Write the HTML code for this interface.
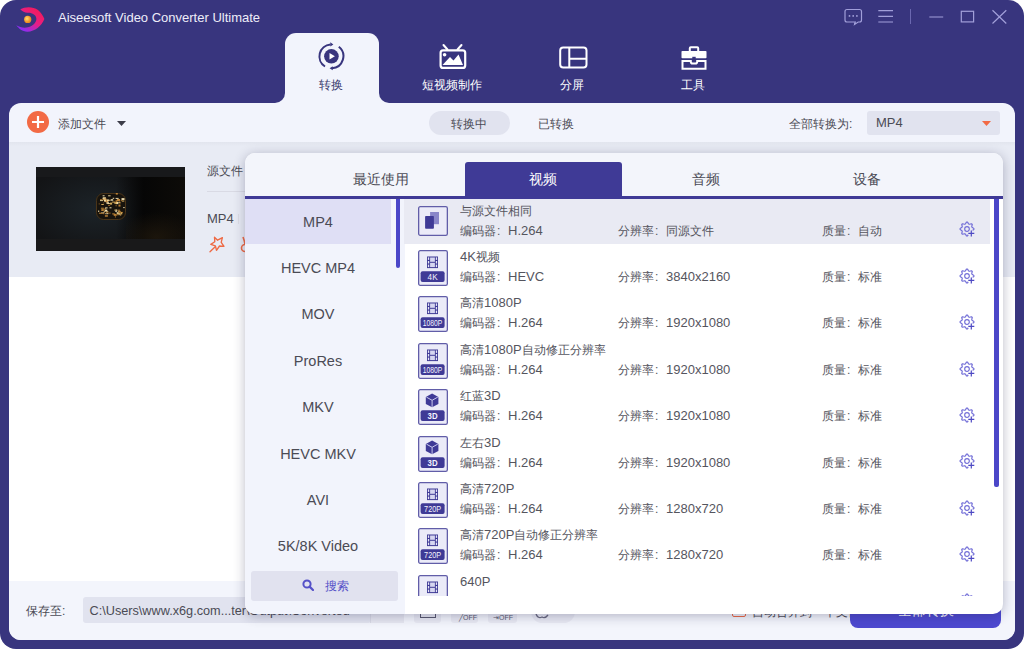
<!DOCTYPE html>
<html><head><meta charset="utf-8">
<style>
*{margin:0;padding:0;box-sizing:border-box}
html,body{width:1024px;height:649px;overflow:hidden;background:#fff;font-family:"Liberation Sans",sans-serif}
.a{position:absolute}
#win{position:absolute;left:0;top:0;width:1024px;height:649px;background:#38357e;border-radius:16px;overflow:hidden}
.title{left:58px;top:10px;color:#eeedf9;font-size:13px;white-space:nowrap;line-height:15px}
.nl{color:#fff;font-size:12px;text-align:center;width:100px;top:78px;white-space:nowrap;line-height:14px}
.t{color:#4b4b55;font-size:12px;white-space:nowrap;line-height:14px}
.T{color:#55555e;font-size:12px;white-space:nowrap;line-height:14px}
.L{font-size:13px}
.c{display:inline-block;width:12px;padding-left:1px}
</style></head><body>
<div id="win">
  <!-- logo -->
  <svg class="a" style="left:0;top:0" width="60" height="40" viewBox="0 0 60 40">
    <defs><linearGradient id="lg" x1="0.9" y1="0.1" x2="0.2" y2="0.9"><stop offset="0" stop-color="#f51a55"/><stop offset="0.5" stop-color="#e81e84"/><stop offset="1" stop-color="#8e2df2"/></linearGradient>
    <radialGradient id="og" cx="0.4" cy="0.4"><stop offset="0" stop-color="#ffe070"/><stop offset="1" stop-color="#f29020"/></radialGradient></defs>
    <path d="M20.3 9.2 C25 6.6 33 6.3 38 10 C41 12.5 43 15.5 44.4 19 C41.5 26 35 31.5 27.5 31.7 C22.5 31.8 18.8 28.5 16.3 25.3 C20 27.5 24 28.2 28 27.3 C33 26 36.4 22.5 36.4 19 C36.4 15 32 12.6 28 12.8 C25 13 22.5 11.5 20.3 9.2Z" fill="url(#lg)"/>
    <circle cx="27.7" cy="19.4" r="3.6" fill="url(#og)"/>
  </svg>
  <div class="a title">Aiseesoft Video Converter Ultimate</div>

  <!-- top right icons -->
  <svg class="a" style="left:840px;top:4px" width="175" height="24" viewBox="840 4 175 24" fill="none" stroke="#a19fd9" stroke-width="1.2">
    <path d="M847 9.5 H859.5 Q861.5 9.5 861.5 11.5 V20 Q861.5 22 859.5 22 H858.2 L854.6 24.4 L855.3 22 H847 Q845 22 845 20 V11.5 Q845 9.5 847 9.5Z"/>
    <circle cx="849.5" cy="15.9" r="0.9" fill="#a4a2dc" stroke="none"/>
    <circle cx="853.2" cy="15.9" r="0.9" fill="#a4a2dc" stroke="none"/>
    <circle cx="856.9" cy="15.9" r="0.9" fill="#a4a2dc" stroke="none"/>
    <path d="M878.3 10.6 H893 M878.3 16.3 H893 M878.3 22 H893"/>
    <path d="M910.5 9 V24" stroke-width="1" stroke="#6b68b0"/>
    <path d="M929.3 17 H943.2"/>
    <rect x="961.3" y="11.3" width="12.3" height="10.6"/>
    <path d="M992.5 10.3 L1006.3 23.5 M1006.3 10.3 L992.5 23.5"/>
  </svg>

  <!-- active tab -->
  <div class="a" style="left:285px;top:33px;width:94px;height:72px;background:#f2f4fc;border-radius:11px 11px 0 0"></div>
  <div class="a" style="left:273px;top:90px;width:12px;height:13px;background:#f2f4fc"></div>
  <div class="a" style="left:263px;top:80px;width:22px;height:23px;background:#38357e;border-radius:0 0 10px 0"></div>
  <div class="a" style="left:379px;top:90px;width:12px;height:13px;background:#f2f4fc"></div>
  <div class="a" style="left:379px;top:80px;width:22px;height:23px;background:#38357e;border-radius:0 0 0 10px"></div>

  <!-- nav icons -->
  <svg class="a" style="left:316px;top:41px" width="30" height="30" viewBox="316 41 30 30">
    <circle cx="331.4" cy="56.3" r="7.3" fill="#38357e"/>
    <path d="M329.5 53 L334.9 56.3 L329.5 59.6 Z" fill="#fff"/>
    <path d="M325 66.5 A12 12 0 0 1 330.5 44.4" fill="none" stroke="#38357e" stroke-width="2"/>
    <path d="M338.8 46.8 A12 12 0 0 1 332 68.2" fill="none" stroke="#38357e" stroke-width="2"/>
    <path d="M330.3 42.3 L333.4 44.4 L330.3 46.4Z" fill="#38357e"/>
    <path d="M332.7 66.2 L329.6 68.3 L332.7 70.3Z" fill="#38357e"/>
  </svg>
  <svg class="a" style="left:436px;top:42px" width="34" height="30" viewBox="436 42 34 30">
    <path d="M443.5 45 L447.5 49.5 M461.5 45 L457.5 49.5" stroke="#fff" stroke-width="2" stroke-linecap="round"/>
    <rect x="440.6" y="50.3" width="24.6" height="17.6" rx="2.5" fill="none" stroke="#fff" stroke-width="2.2"/>
    <circle cx="444.6" cy="54.7" r="1.8" fill="#fff"/>
    <path d="M442.5 65 L450 57 L453.5 60.5 L458.5 54.5 L463 65Z" fill="#fff"/>
  </svg>
  <svg class="a" style="left:556px;top:43px" width="34" height="30" viewBox="556 43 34 30" fill="none" stroke="#fff" stroke-width="2">
    <rect x="560.2" y="47.4" width="26.3" height="20.2" rx="3"/>
    <path d="M569.3 47.4 V67.6 M569.3 58.7 H586.5"/>
  </svg>
  <svg class="a" style="left:678px;top:44px" width="32" height="28" viewBox="678 44 32 28">
    <path d="M689.8 51 V48.3 Q689.8 47.3 690.8 47.3 H697.2 Q698.2 47.3 698.2 48.3 V51" fill="none" stroke="#fff" stroke-width="2"/>
    <rect x="681.5" y="51" width="25" height="7.3" rx="0.8" fill="#fff"/>
    <path d="M682.5 60.9 H690.8 V61.8 Q690.8 63.6 692.6 63.6 H695.4 Q697.2 63.6 697.2 61.8 V60.9 H705.5 V68.8 H682.5Z" fill="none" stroke="#fff" stroke-width="2"/>
    <rect x="692.3" y="56.8" width="3.4" height="4.2" fill="#38357e"/>
  </svg>

  <div class="a nl" style="left:281px;color:#3a3a6e">转换</div>
  <div class="a nl" style="left:402px">短视频制作</div>
  <div class="a nl" style="left:522px">分屏</div>
  <div class="a nl" style="left:643px">工具</div>

  <!-- content panel -->
  <div class="a" style="left:9px;top:102.6px;width:1006px;height:537px;background:#f2f4fc;border-radius:12px;overflow:hidden">
    <div class="a" style="left:0;top:39.5px;width:1006px;height:134.5px;background:#e8ebf4"></div>
    <div class="a" style="left:0;top:39.5px;width:1006px;height:4px;background:linear-gradient(#e2e5ee,#e8ebf4)"></div>
    <div class="a" style="left:0;top:174px;width:1006px;height:304.4px;background:#fff"></div>
    <div class="a" style="left:0;top:478.4px;width:1006px;height:60px;background:#f3f5fc"></div>
  </div>

  <!-- toolbar -->
  <svg class="a" style="left:27.1px;top:111.4px" width="22" height="22" viewBox="0 0 22 22"><circle cx="11" cy="11" r="11" fill="#f26a45"/><path d="M11 5 V17 M5 11 H17" stroke="#fff" stroke-width="2.2"/></svg>
  <div class="a t" style="left:58px;top:116.5px">添加文件</div>
  <svg class="a" style="left:117px;top:120.8px" width="9" height="5" viewBox="0 0 9 5"><path d="M0 0 H9 L4.5 5Z" fill="#3c3c48"/></svg>
  <div class="a" style="left:429px;top:111px;width:81px;height:24px;border-radius:12px;background:#e1e3ef"></div>
  <div class="a t" style="left:451px;top:117px">转换中</div>
  <div class="a t" style="left:538px;top:117px">已转换</div>
  <div class="a t" style="left:789px;top:117px">全部转换为:</div>
  <div class="a" style="left:867px;top:111px;width:133px;height:24px;border-radius:3px;background:#e1e3ef"></div>
  <div class="a t" style="left:876px;top:116px;font-size:13px">MP4</div>
  <svg class="a" style="left:981.5px;top:120.6px" width="9" height="5" viewBox="0 0 9 5"><path d="M0 0 H9 L4.5 5Z" fill="#f26a45"/></svg>

  <!-- file item -->
  <div class="a" style="left:36px;top:167px;width:149px;height:84px;background:#131416;overflow:hidden">
    <div class="a" style="left:0;top:0;width:149px;height:10px;background:#18191b"></div>
    <div class="a" style="left:0;top:10px;width:149px;height:62px;background:radial-gradient(ellipse 70px 45px at 60px 32px,#1c2328,rgba(20,22,25,0) 100%)"></div>
    <div class="a" style="left:80px;top:10px;width:69px;height:62px;background:linear-gradient(90deg,rgba(5,5,5,0),#060606 40%,#0d0b08)"></div>
    <div class="a" style="left:90px;top:40px;width:59px;height:32px;background:radial-gradient(ellipse 40px 25px at 30px 30px,rgba(40,30,15,.6),rgba(20,15,8,0))"></div>
    <div class="a" style="left:0;top:72px;width:149px;height:12px;background:#19191a"></div>
    <svg class="a" style="left:60px;top:26px" width="30" height="27" viewBox="0 0 30 27"><rect x="0.5" y="0.5" width="29" height="26" rx="7" fill="#17130d" stroke="#4a3418" stroke-width="1"/><rect x="7.2" y="9.4" width="1" height="1" fill="#9a6a2a" opacity="0.9"/><rect x="11.5" y="10.1" width="3" height="1" fill="#f5dfa0" opacity="0.9"/><rect x="10.9" y="9.5" width="1.5" height="1" fill="#9a6a2a" opacity="0.9"/><rect x="2.7" y="10.4" width="1" height="1" fill="#9a6a2a" opacity="0.9"/><rect x="12.0" y="6.8" width="2.5" height="1" fill="#e8b860" opacity="0.9"/><rect x="14.1" y="9.6" width="2" height="2" fill="#e8b860" opacity="0.9"/><rect x="4.0" y="7.1" width="3" height="1" fill="#f5dfa0" opacity="0.9"/><rect x="4.0" y="6.0" width="2" height="1" fill="#9a6a2a" opacity="0.9"/><rect x="7.0" y="4.5" width="3" height="1" fill="#fff0c0" opacity="0.9"/><rect x="6.6" y="5.3" width="2" height="2" fill="#9a6a2a" opacity="0.9"/><rect x="10.7" y="6.8" width="1.5" height="1" fill="#e8b860" opacity="0.9"/><rect x="10.4" y="9.2" width="2.5" height="1.5" fill="#fff0c0" opacity="0.9"/><rect x="5.9" y="15.6" width="1" height="2" fill="#e8b860" opacity="0.9"/><rect x="8.1" y="6.4" width="2.5" height="2" fill="#f5dfa0" opacity="0.9"/><rect x="9.2" y="7.7" width="3" height="1.5" fill="#c88a38" opacity="0.9"/><rect x="6.6" y="4.5" width="3" height="2" fill="#f5dfa0" opacity="0.9"/><rect x="12.1" y="2.3" width="2.5" height="1" fill="#f5dfa0" opacity="0.9"/><rect x="7.7" y="5.6" width="3" height="2" fill="#c88a38" opacity="0.9"/><rect x="6.6" y="2.3" width="2" height="1" fill="#fff0c0" opacity="0.9"/><rect x="5.3" y="11.0" width="2.5" height="1" fill="#e8b860" opacity="0.9"/><rect x="8.2" y="6.5" width="1.5" height="2" fill="#fff0c0" opacity="0.9"/><rect x="11.2" y="6.4" width="1.5" height="2" fill="#fff0c0" opacity="0.9"/><rect x="14.7" y="6.2" width="2.5" height="1.5" fill="#fff0c0" opacity="0.9"/><rect x="25.8" y="7.6" width="2.5" height="1" fill="#e8b860" opacity="0.9"/><rect x="22.6" y="8.8" width="1.5" height="1" fill="#fff0c0" opacity="0.9"/><rect x="22.0" y="6.4" width="2" height="1" fill="#e8b860" opacity="0.9"/><rect x="18.3" y="9.3" width="3" height="1.5" fill="#e8b860" opacity="0.9"/><rect x="19.6" y="4.9" width="3" height="1" fill="#fff0c0" opacity="0.9"/><rect x="25.5" y="5.1" width="3" height="2" fill="#fff0c0" opacity="0.9"/><rect x="19.8" y="8.8" width="2.5" height="1" fill="#e8b860" opacity="0.9"/><rect x="23.0" y="8.8" width="1.5" height="1" fill="#c88a38" opacity="0.9"/><rect x="19.8" y="7.2" width="3" height="1" fill="#9a6a2a" opacity="0.9"/><rect x="23.4" y="9.6" width="1" height="1" fill="#e8b860" opacity="0.9"/><rect x="19.6" y="7.0" width="2" height="1.5" fill="#9a6a2a" opacity="0.9"/><rect x="19.9" y="9.1" width="2.5" height="2" fill="#fff0c0" opacity="0.9"/><rect x="19.7" y="8.1" width="1" height="1.5" fill="#c88a38" opacity="0.9"/><rect x="16.1" y="8.6" width="3" height="1" fill="#e8b860" opacity="0.9"/><rect x="24.7" y="7.0" width="1.5" height="1" fill="#9a6a2a" opacity="0.9"/><rect x="19.6" y="11.8" width="1" height="1.5" fill="#9a6a2a" opacity="0.9"/><rect x="19.7" y="9.3" width="1.5" height="1.5" fill="#e8b860" opacity="0.9"/><rect x="16.7" y="4.8" width="1.5" height="1" fill="#fff0c0" opacity="0.9"/><rect x="20.9" y="6.0" width="3" height="2" fill="#c88a38" opacity="0.9"/><rect x="19.8" y="-0.4" width="2" height="2" fill="#c88a38" opacity="0.9"/><rect x="22.5" y="11.6" width="2" height="2" fill="#c88a38" opacity="0.9"/><rect x="10.9" y="18.3" width="1.5" height="1" fill="#e8b860" opacity="0.9"/><rect x="5.1" y="19.5" width="2.5" height="1" fill="#fff0c0" opacity="0.9"/><rect x="10.5" y="17.6" width="1" height="1" fill="#fff0c0" opacity="0.9"/><rect x="9.1" y="14.4" width="2.5" height="1" fill="#fff0c0" opacity="0.9"/><rect x="8.7" y="16.6" width="2.5" height="2" fill="#fff0c0" opacity="0.9"/><rect x="7.9" y="17.8" width="1.5" height="1" fill="#e8b860" opacity="0.9"/><rect x="12.2" y="19.6" width="2.5" height="1" fill="#9a6a2a" opacity="0.9"/><rect x="12.1" y="12.0" width="2" height="1" fill="#9a6a2a" opacity="0.9"/><rect x="7.4" y="18.8" width="1" height="1" fill="#fff0c0" opacity="0.9"/><rect x="10.1" y="18.8" width="1.5" height="1" fill="#c88a38" opacity="0.9"/><rect x="8.9" y="22.2" width="3" height="1.5" fill="#c88a38" opacity="0.9"/><rect x="2.2" y="17.5" width="1" height="1.5" fill="#fff0c0" opacity="0.9"/><rect x="4.9" y="14.6" width="3" height="2" fill="#9a6a2a" opacity="0.9"/><rect x="9.3" y="20.2" width="3" height="1" fill="#fff0c0" opacity="0.9"/><rect x="8.7" y="15.2" width="1.5" height="1" fill="#e8b860" opacity="0.9"/><rect x="2.9" y="19.7" width="3" height="1" fill="#c88a38" opacity="0.9"/><rect x="6.4" y="15.9" width="2.5" height="1" fill="#9a6a2a" opacity="0.9"/><rect x="10.0" y="19.6" width="1" height="1" fill="#9a6a2a" opacity="0.9"/><rect x="7.3" y="19.2" width="1" height="2" fill="#c88a38" opacity="0.9"/><rect x="5.1" y="16.8" width="3" height="1" fill="#c88a38" opacity="0.9"/><rect x="4.2" y="20.0" width="2.5" height="1" fill="#9a6a2a" opacity="0.9"/><rect x="13.5" y="14.3" width="2" height="1" fill="#fff0c0" opacity="0.9"/><rect x="22.1" y="20.1" width="2.5" height="1.5" fill="#f5dfa0" opacity="0.9"/><rect x="19.4" y="16.4" width="1.5" height="1.5" fill="#f5dfa0" opacity="0.9"/><rect x="22.5" y="18.0" width="2" height="1" fill="#c88a38" opacity="0.9"/><rect x="27.2" y="14.1" width="1.5" height="1" fill="#fff0c0" opacity="0.9"/><rect x="22.4" y="17.9" width="1.5" height="1" fill="#fff0c0" opacity="0.9"/><rect x="24.3" y="18.9" width="2.5" height="1" fill="#c88a38" opacity="0.9"/><rect x="18.9" y="23.1" width="1" height="1.5" fill="#9a6a2a" opacity="0.9"/><rect x="16.2" y="20.1" width="2.5" height="1.5" fill="#9a6a2a" opacity="0.9"/><rect x="18.3" y="16.6" width="1" height="1" fill="#e8b860" opacity="0.9"/><rect x="22.5" y="18.8" width="2" height="1.5" fill="#f5dfa0" opacity="0.9"/><rect x="22.7" y="18.0" width="1.5" height="2" fill="#c88a38" opacity="0.9"/><rect x="17.7" y="20.9" width="3" height="2" fill="#c88a38" opacity="0.9"/><rect x="21.9" y="19.5" width="1.5" height="2" fill="#f5dfa0" opacity="0.9"/><rect x="20.9" y="19.5" width="1" height="1.5" fill="#f5dfa0" opacity="0.9"/><rect x="19.2" y="17.8" width="2" height="1" fill="#fff0c0" opacity="0.9"/><rect x="31.3" y="19.7" width="2.5" height="1.5" fill="#9a6a2a" opacity="0.9"/><rect x="23.7" y="21.5" width="1.5" height="1" fill="#e8b860" opacity="0.9"/><rect x="20.8" y="20.8" width="2" height="1.5" fill="#9a6a2a" opacity="0.9"/><rect x="21.2" y="16.7" width="3" height="1" fill="#c88a38" opacity="0.9"/><rect x="20.6" y="19.4" width="2" height="1" fill="#f5dfa0" opacity="0.9"/><rect x="24.8" y="19.4" width="1.5" height="2" fill="#e8b860" opacity="0.9"/><rect x="22.4" y="18.5" width="2.5" height="2" fill="#9a6a2a" opacity="0.9"/></svg>
  </div>
  <div class="a t" style="left:207px;top:164px">源文件</div>
  <div class="a" style="left:207px;top:191px;width:40px;height:1px;background:#d9dae4"></div>
  <div class="a t" style="left:207px;top:212px;font-size:13px">MP4</div>
  <div class="a" style="left:238px;top:214px;width:1px;height:10px;background:#dcdde6"></div>
  <svg class="a" style="left:205px;top:232px" width="24" height="24" viewBox="205 232 24 24" fill="none" stroke="#ee6a45" stroke-width="1.35" stroke-linejoin="round" stroke-linecap="round">
    <path d="M214.5 237.2 L217.6 240.2 L222.4 237.6 L221.2 242.3 L224 246.3 L219.5 246 L216.5 250.3 L215.4 245.8 L210.8 244.4 L214.8 241.8Z"/>
    <path d="M215.2 246.8 L210 251.8"/>
  </svg>
  <svg class="a" style="left:236px;top:232px" width="12" height="24" viewBox="236 232 12 24" fill="none" stroke="#ee6a45" stroke-width="1.6">
    <path d="M243 237 Q244.5 241 245 244"/><circle cx="245" cy="248" r="3.5"/>
  </svg>

  <!-- bottom bar -->
  <div class="a t" style="left:26px;top:604px">保存至:</div>
  <div class="a" style="left:82.7px;top:597px;width:288px;height:26px;border-radius:3px;background:#e1e3ef"></div>
  <div class="a t" style="left:89.5px;top:604px;font-size:12.7px;line-height:15px">C:\Users\www.x6g.com...ter\Output\Converted</div>
  <div class="a" style="left:370px;top:597px;width:34px;height:26px;background:#e6e7f1;border-left:1px solid #d8d9e5"></div>
  <div class="a" style="left:413.7px;top:600px;width:27.3px;height:23px;border-radius:3px;background:#e8e9f3"></div>
  <div class="a" style="left:420px;top:612px;width:16px;height:6px;border:1.5px solid #5a5a70;border-top:none"></div>
  <div class="a" style="left:450.8px;top:600px;width:27.3px;height:23px;border-radius:3px;background:#e8e9f3"></div>
  <div class="a" style="left:488px;top:600px;width:29px;height:23px;border-radius:3px;background:#e8e9f3"></div>
  <div class="a" style="left:459px;top:614px;font-size:7px;line-height:8px;color:#5a5a70">╱OFF</div>
  <div class="a" style="left:493px;top:614px;font-size:7px;line-height:8px;color:#5a5a70">⇥OFF</div>
  <div class="a" style="left:531px;top:600px;width:44px;height:23px;border-radius:12px;background:#e8e9f3"></div>
  <svg class="a" style="left:532px;top:610px" width="22" height="10" viewBox="0 0 22 10"><path d="M4 4 Q6 9 10 7 Q13 9 16 5" fill="none" stroke="#6a6a80" stroke-width="1.3"/></svg>
  <div class="a" style="left:732px;top:603px;width:14px;height:14px;border:1.5px solid #ee6a45;border-radius:2px"></div>
  <div class="a t" style="left:752px;top:605px">自动合并到一个文件</div>
  <div class="a" style="left:850px;top:590px;width:151px;height:38px;border-radius:8px;background:#4d49d0"></div>
  <div class="a" style="left:850px;top:602px;width:151px;text-align:center;font-size:14px;line-height:16px;color:#fff">全部转换</div>
<div class="a" style="left:245px;top:153px;width:758px;height:461.3px;border-radius:10px;background:#fff;box-shadow:0 2px 12px rgba(30,30,70,.3);overflow:hidden">
<div class="a" style="left:0;top:0;width:758px;height:44px;background:#f3f5fb"></div>
<div class="a" style="left:220px;top:9px;width:157px;height:35px;background:#3f3a96;border-radius:3px 3px 0 0"></div>
<div class="a" style="left:0;top:43px;width:758px;height:3px;background:#3f3a96"></div>
<div class="a" style="left:0;top:46px;width:159.7px;height:416px;background:#f2f4fc"></div>
<div class="a" style="left:0;top:46px;width:145.5px;height:44.5px;background:#dfdff5"></div>
<div class="a" style="left:150.5px;top:46px;width:4.5px;height:69px;border-radius:0 0 2px 2px;background:#4b47c8"></div>
<div class="a" style="left:159px;top:46px;width:586px;height:44.5px;background:#e9eaf3"></div>
<div class="a" style="left:749px;top:46px;width:4.6px;height:288px;border-radius:0 0 2px 2px;background:#4b47c8"></div>
<div class="a" style="left:6px;top:418px;width:147px;height:30px;border-radius:3px;background:#e1e2ef"></div>
</div>
<div class="a" style="left:321px;top:171px;width:120px;text-align:center;font-size:14px;line-height:16px;color:#4b4b55;white-space:nowrap">最近使用</div>
<div class="a" style="left:483px;top:171px;width:120px;text-align:center;font-size:14px;line-height:16px;color:#ffffff;white-space:nowrap">视频</div>
<div class="a" style="left:646px;top:171px;width:120px;text-align:center;font-size:14px;line-height:16px;color:#4b4b55;white-space:nowrap">音频</div>
<div class="a" style="left:807px;top:171px;width:120px;text-align:center;font-size:14px;line-height:16px;color:#4b4b55;white-space:nowrap">设备</div>
<div class="a" style="left:258px;top:212.5px;width:120px;text-align:center;font-size:14.5px;line-height:18px;color:#4b4b55;white-space:nowrap">MP4</div>
<div class="a" style="left:258px;top:258.9px;width:120px;text-align:center;font-size:14.5px;line-height:18px;color:#4b4b55;white-space:nowrap">HEVC MP4</div>
<div class="a" style="left:258px;top:305.3px;width:120px;text-align:center;font-size:14.5px;line-height:18px;color:#4b4b55;white-space:nowrap">MOV</div>
<div class="a" style="left:258px;top:351.7px;width:120px;text-align:center;font-size:14.5px;line-height:18px;color:#4b4b55;white-space:nowrap">ProRes</div>
<div class="a" style="left:258px;top:398.1px;width:120px;text-align:center;font-size:14.5px;line-height:18px;color:#4b4b55;white-space:nowrap">MKV</div>
<div class="a" style="left:258px;top:444.5px;width:120px;text-align:center;font-size:14.5px;line-height:18px;color:#4b4b55;white-space:nowrap">HEVC MKV</div>
<div class="a" style="left:258px;top:490.9px;width:120px;text-align:center;font-size:14.5px;line-height:18px;color:#4b4b55;white-space:nowrap">AVI</div>
<div class="a" style="left:258px;top:537.3px;width:120px;text-align:center;font-size:14.5px;line-height:18px;color:#4b4b55;white-space:nowrap">5K/8K Video</div>
<svg class="a" style="left:302px;top:579px" width="12" height="12" viewBox="0 0 12 12"><circle cx="5" cy="5" r="3.6" fill="none" stroke="#5551c8" stroke-width="2"/><path d="M7.6 7.6 L11 11" stroke="#5551c8" stroke-width="2.2" stroke-linecap="round"/></svg>
<div class="a" style="left:325px;top:579px;font-size:12px;line-height:14px;color:#5551c8;white-space:nowrap">搜索</div>
<div class="a" style="left:405px;top:199px;width:589px;height:396.6px;overflow:hidden">
<div class="a T" style="left:55px;top:4.5px">与源文件相同</div>
<div class="a T" style="left:55px;top:24.5px">编码器<span class="c">:</span><span class="L">H.264</span></div>
<div class="a T" style="left:213px;top:24.5px">分辨率<span class="c">:</span>同源文件</div>
<div class="a T" style="left:417px;top:24.5px">质量<span class="c">:</span>自动</div>
<svg class="a" style="left:553px;top:21.3px" width="20" height="20" viewBox="-9 -9 20 20"><path d="M-0.54 -6.88 L0.54 -6.88 L1.64 -5.04 L2.41 -4.72 L4.48 -5.25 L5.25 -4.48 L4.72 -2.41 L5.04 -1.64 L6.88 -0.54 L6.88 0.54 L5.04 1.64 L4.72 2.41 L5.25 4.48 L4.48 5.25 L2.41 4.72 L1.64 5.04 L0.54 6.88 L-0.54 6.88 L-1.64 5.04 L-2.41 4.72 L-4.48 5.25 L-5.25 4.48 L-4.72 2.41 L-5.04 1.64 L-6.88 0.54 L-6.88 -0.54 L-5.04 -1.64 L-4.72 -2.41 L-5.25 -4.48 L-4.48 -5.25 L-2.41 -4.72 L-1.64 -5.04Z" fill="none" stroke="#7470d8" stroke-width="1.2" stroke-linejoin="round"/><circle cx="0" cy="0" r="2.3" fill="none" stroke="#7470d8" stroke-width="1.2"/><path d="M4.3 1.2 V7.6 M1.1 4.4 H7.5" stroke="#e9eaf3" stroke-width="3.2"/><path d="M4.3 1.4 V7.4 M1.3 4.4 H7.3" stroke="#4e4ac4" stroke-width="1.2"/></svg>
<svg class="a" style="left:13px;top:7.0px" width="30" height="30" viewBox="0 0 30 30"><rect x="0.65" y="0.65" width="28.7" height="28.7" rx="1.6" fill="#ebebf8" stroke="#615da8" stroke-width="1.3"/><rect x="12.1" y="6" width="8.9" height="12.2" fill="#8986c9"/><rect x="7.1" y="10" width="8.8" height="12.7" rx="0.8" fill="#3f3a96"/></svg>
<div class="a T" style="left:55px;top:50.9px"><span class="L">4K</span>视频</div>
<div class="a T" style="left:55px;top:70.9px">编码器<span class="c">:</span><span class="L">HEVC</span></div>
<div class="a T" style="left:213px;top:70.9px">分辨率<span class="c">:</span><span class="L">3840x2160</span></div>
<div class="a T" style="left:417px;top:70.9px">质量<span class="c">:</span>标准</div>
<svg class="a" style="left:553px;top:67.7px" width="20" height="20" viewBox="-9 -9 20 20"><path d="M-0.54 -6.88 L0.54 -6.88 L1.64 -5.04 L2.41 -4.72 L4.48 -5.25 L5.25 -4.48 L4.72 -2.41 L5.04 -1.64 L6.88 -0.54 L6.88 0.54 L5.04 1.64 L4.72 2.41 L5.25 4.48 L4.48 5.25 L2.41 4.72 L1.64 5.04 L0.54 6.88 L-0.54 6.88 L-1.64 5.04 L-2.41 4.72 L-4.48 5.25 L-5.25 4.48 L-4.72 2.41 L-5.04 1.64 L-6.88 0.54 L-6.88 -0.54 L-5.04 -1.64 L-4.72 -2.41 L-5.25 -4.48 L-4.48 -5.25 L-2.41 -4.72 L-1.64 -5.04Z" fill="none" stroke="#7470d8" stroke-width="1.2" stroke-linejoin="round"/><circle cx="0" cy="0" r="2.3" fill="none" stroke="#7470d8" stroke-width="1.2"/><path d="M4.3 1.2 V7.6 M1.1 4.4 H7.5" stroke="#ffffff" stroke-width="3.2"/><path d="M4.3 1.4 V7.4 M1.3 4.4 H7.3" stroke="#4e4ac4" stroke-width="1.2"/></svg>
<svg class="a" style="left:13px;top:51.0px" width="30" height="36" viewBox="0 0 30 36"><rect x="0.65" y="0.65" width="28.7" height="34.7" rx="1.6" fill="#ebebf8" stroke="#615da8" stroke-width="1.3"/><rect x="9" y="6.5" width="11" height="11.6" fill="#3f3a96"/><rect x="9.9" y="7.4" width="1.3" height="2.5" fill="#e6e6f6"/><rect x="17.8" y="7.4" width="1.3" height="2.5" fill="#e6e6f6"/><rect x="9.9" y="11.0" width="1.3" height="2.5" fill="#e6e6f6"/><rect x="17.8" y="11.0" width="1.3" height="2.5" fill="#e6e6f6"/><rect x="9.9" y="14.6" width="1.3" height="2.5" fill="#e6e6f6"/><rect x="17.8" y="14.6" width="1.3" height="2.5" fill="#e6e6f6"/><rect x="12.1" y="7.5" width="4.8" height="4.3" fill="#d6d6f0"/><rect x="12.1" y="12.8" width="4.8" height="4.3" fill="#d6d6f0"/><rect x="2.6" y="21.3" width="24" height="10.7" rx="2" fill="#3f3a96"/><text x="14.6" y="30.0" font-family="Liberation Sans" font-size="9.3" font-weight="normal" fill="#f4f4ff" text-anchor="middle" textLength="10" lengthAdjust="spacingAndGlyphs">4K</text></svg>
<div class="a T" style="left:55px;top:97.3px">高清<span class="L">1080P</span></div>
<div class="a T" style="left:55px;top:117.3px">编码器<span class="c">:</span><span class="L">H.264</span></div>
<div class="a T" style="left:213px;top:117.3px">分辨率<span class="c">:</span><span class="L">1920x1080</span></div>
<div class="a T" style="left:417px;top:117.3px">质量<span class="c">:</span>标准</div>
<svg class="a" style="left:553px;top:114.1px" width="20" height="20" viewBox="-9 -9 20 20"><path d="M-0.54 -6.88 L0.54 -6.88 L1.64 -5.04 L2.41 -4.72 L4.48 -5.25 L5.25 -4.48 L4.72 -2.41 L5.04 -1.64 L6.88 -0.54 L6.88 0.54 L5.04 1.64 L4.72 2.41 L5.25 4.48 L4.48 5.25 L2.41 4.72 L1.64 5.04 L0.54 6.88 L-0.54 6.88 L-1.64 5.04 L-2.41 4.72 L-4.48 5.25 L-5.25 4.48 L-4.72 2.41 L-5.04 1.64 L-6.88 0.54 L-6.88 -0.54 L-5.04 -1.64 L-4.72 -2.41 L-5.25 -4.48 L-4.48 -5.25 L-2.41 -4.72 L-1.64 -5.04Z" fill="none" stroke="#7470d8" stroke-width="1.2" stroke-linejoin="round"/><circle cx="0" cy="0" r="2.3" fill="none" stroke="#7470d8" stroke-width="1.2"/><path d="M4.3 1.2 V7.6 M1.1 4.4 H7.5" stroke="#ffffff" stroke-width="3.2"/><path d="M4.3 1.4 V7.4 M1.3 4.4 H7.3" stroke="#4e4ac4" stroke-width="1.2"/></svg>
<svg class="a" style="left:13px;top:97.4px" width="30" height="36" viewBox="0 0 30 36"><rect x="0.65" y="0.65" width="28.7" height="34.7" rx="1.6" fill="#ebebf8" stroke="#615da8" stroke-width="1.3"/><rect x="9" y="6.5" width="11" height="11.6" fill="#3f3a96"/><rect x="9.9" y="7.4" width="1.3" height="2.5" fill="#e6e6f6"/><rect x="17.8" y="7.4" width="1.3" height="2.5" fill="#e6e6f6"/><rect x="9.9" y="11.0" width="1.3" height="2.5" fill="#e6e6f6"/><rect x="17.8" y="11.0" width="1.3" height="2.5" fill="#e6e6f6"/><rect x="9.9" y="14.6" width="1.3" height="2.5" fill="#e6e6f6"/><rect x="17.8" y="14.6" width="1.3" height="2.5" fill="#e6e6f6"/><rect x="12.1" y="7.5" width="4.8" height="4.3" fill="#d6d6f0"/><rect x="12.1" y="12.8" width="4.8" height="4.3" fill="#d6d6f0"/><rect x="2.6" y="21.3" width="24" height="10.7" rx="2" fill="#3f3a96"/><text x="14.6" y="30.0" font-family="Liberation Sans" font-size="9.3" font-weight="normal" fill="#f4f4ff" text-anchor="middle" textLength="19.5" lengthAdjust="spacingAndGlyphs">1080P</text></svg>
<div class="a T" style="left:55px;top:143.7px">高清<span class="L">1080P</span>自动修正分辨率</div>
<div class="a T" style="left:55px;top:163.7px">编码器<span class="c">:</span><span class="L">H.264</span></div>
<div class="a T" style="left:213px;top:163.7px">分辨率<span class="c">:</span><span class="L">1920x1080</span></div>
<div class="a T" style="left:417px;top:163.7px">质量<span class="c">:</span>标准</div>
<svg class="a" style="left:553px;top:160.5px" width="20" height="20" viewBox="-9 -9 20 20"><path d="M-0.54 -6.88 L0.54 -6.88 L1.64 -5.04 L2.41 -4.72 L4.48 -5.25 L5.25 -4.48 L4.72 -2.41 L5.04 -1.64 L6.88 -0.54 L6.88 0.54 L5.04 1.64 L4.72 2.41 L5.25 4.48 L4.48 5.25 L2.41 4.72 L1.64 5.04 L0.54 6.88 L-0.54 6.88 L-1.64 5.04 L-2.41 4.72 L-4.48 5.25 L-5.25 4.48 L-4.72 2.41 L-5.04 1.64 L-6.88 0.54 L-6.88 -0.54 L-5.04 -1.64 L-4.72 -2.41 L-5.25 -4.48 L-4.48 -5.25 L-2.41 -4.72 L-1.64 -5.04Z" fill="none" stroke="#7470d8" stroke-width="1.2" stroke-linejoin="round"/><circle cx="0" cy="0" r="2.3" fill="none" stroke="#7470d8" stroke-width="1.2"/><path d="M4.3 1.2 V7.6 M1.1 4.4 H7.5" stroke="#ffffff" stroke-width="3.2"/><path d="M4.3 1.4 V7.4 M1.3 4.4 H7.3" stroke="#4e4ac4" stroke-width="1.2"/></svg>
<svg class="a" style="left:13px;top:143.8px" width="30" height="36" viewBox="0 0 30 36"><rect x="0.65" y="0.65" width="28.7" height="34.7" rx="1.6" fill="#ebebf8" stroke="#615da8" stroke-width="1.3"/><rect x="9" y="6.5" width="11" height="11.6" fill="#3f3a96"/><rect x="9.9" y="7.4" width="1.3" height="2.5" fill="#e6e6f6"/><rect x="17.8" y="7.4" width="1.3" height="2.5" fill="#e6e6f6"/><rect x="9.9" y="11.0" width="1.3" height="2.5" fill="#e6e6f6"/><rect x="17.8" y="11.0" width="1.3" height="2.5" fill="#e6e6f6"/><rect x="9.9" y="14.6" width="1.3" height="2.5" fill="#e6e6f6"/><rect x="17.8" y="14.6" width="1.3" height="2.5" fill="#e6e6f6"/><rect x="12.1" y="7.5" width="4.8" height="4.3" fill="#d6d6f0"/><rect x="12.1" y="12.8" width="4.8" height="4.3" fill="#d6d6f0"/><rect x="2.6" y="21.3" width="24" height="10.7" rx="2" fill="#3f3a96"/><text x="14.6" y="30.0" font-family="Liberation Sans" font-size="9.3" font-weight="normal" fill="#f4f4ff" text-anchor="middle" textLength="19.5" lengthAdjust="spacingAndGlyphs">1080P</text></svg>
<div class="a T" style="left:55px;top:190.1px">红蓝<span class="L">3D</span></div>
<div class="a T" style="left:55px;top:210.1px">编码器<span class="c">:</span><span class="L">H.264</span></div>
<div class="a T" style="left:213px;top:210.1px">分辨率<span class="c">:</span><span class="L">1920x1080</span></div>
<div class="a T" style="left:417px;top:210.1px">质量<span class="c">:</span>标准</div>
<svg class="a" style="left:553px;top:206.9px" width="20" height="20" viewBox="-9 -9 20 20"><path d="M-0.54 -6.88 L0.54 -6.88 L1.64 -5.04 L2.41 -4.72 L4.48 -5.25 L5.25 -4.48 L4.72 -2.41 L5.04 -1.64 L6.88 -0.54 L6.88 0.54 L5.04 1.64 L4.72 2.41 L5.25 4.48 L4.48 5.25 L2.41 4.72 L1.64 5.04 L0.54 6.88 L-0.54 6.88 L-1.64 5.04 L-2.41 4.72 L-4.48 5.25 L-5.25 4.48 L-4.72 2.41 L-5.04 1.64 L-6.88 0.54 L-6.88 -0.54 L-5.04 -1.64 L-4.72 -2.41 L-5.25 -4.48 L-4.48 -5.25 L-2.41 -4.72 L-1.64 -5.04Z" fill="none" stroke="#7470d8" stroke-width="1.2" stroke-linejoin="round"/><circle cx="0" cy="0" r="2.3" fill="none" stroke="#7470d8" stroke-width="1.2"/><path d="M4.3 1.2 V7.6 M1.1 4.4 H7.5" stroke="#ffffff" stroke-width="3.2"/><path d="M4.3 1.4 V7.4 M1.3 4.4 H7.3" stroke="#4e4ac4" stroke-width="1.2"/></svg>
<svg class="a" style="left:13px;top:190.2px" width="30" height="36" viewBox="0 0 30 36"><rect x="0.65" y="0.65" width="28.7" height="34.7" rx="1.6" fill="#ebebf8" stroke="#615da8" stroke-width="1.3"/><path d="M14.1 4.5 L20.4 7.9 L20.4 14.9 L14.1 18.3 L7.8 14.9 L7.8 7.9Z" fill="#3f3a96"/><path d="M8.4 8.1 L14.1 11.3 L19.8 8.1 M14.1 11.3 V18.0" stroke="#c9c8ee" stroke-width="1" fill="none"/><rect x="2.6" y="21.3" width="24" height="10.7" rx="2" fill="#3f3a96"/><text x="14.6" y="30.0" font-family="Liberation Sans" font-size="9.3" font-weight="bold" fill="#f4f4ff" text-anchor="middle" textLength="10" lengthAdjust="spacingAndGlyphs">3D</text></svg>
<div class="a T" style="left:55px;top:236.5px">左右<span class="L">3D</span></div>
<div class="a T" style="left:55px;top:256.5px">编码器<span class="c">:</span><span class="L">H.264</span></div>
<div class="a T" style="left:213px;top:256.5px">分辨率<span class="c">:</span><span class="L">1920x1080</span></div>
<div class="a T" style="left:417px;top:256.5px">质量<span class="c">:</span>标准</div>
<svg class="a" style="left:553px;top:253.3px" width="20" height="20" viewBox="-9 -9 20 20"><path d="M-0.54 -6.88 L0.54 -6.88 L1.64 -5.04 L2.41 -4.72 L4.48 -5.25 L5.25 -4.48 L4.72 -2.41 L5.04 -1.64 L6.88 -0.54 L6.88 0.54 L5.04 1.64 L4.72 2.41 L5.25 4.48 L4.48 5.25 L2.41 4.72 L1.64 5.04 L0.54 6.88 L-0.54 6.88 L-1.64 5.04 L-2.41 4.72 L-4.48 5.25 L-5.25 4.48 L-4.72 2.41 L-5.04 1.64 L-6.88 0.54 L-6.88 -0.54 L-5.04 -1.64 L-4.72 -2.41 L-5.25 -4.48 L-4.48 -5.25 L-2.41 -4.72 L-1.64 -5.04Z" fill="none" stroke="#7470d8" stroke-width="1.2" stroke-linejoin="round"/><circle cx="0" cy="0" r="2.3" fill="none" stroke="#7470d8" stroke-width="1.2"/><path d="M4.3 1.2 V7.6 M1.1 4.4 H7.5" stroke="#ffffff" stroke-width="3.2"/><path d="M4.3 1.4 V7.4 M1.3 4.4 H7.3" stroke="#4e4ac4" stroke-width="1.2"/></svg>
<svg class="a" style="left:13px;top:236.6px" width="30" height="36" viewBox="0 0 30 36"><rect x="0.65" y="0.65" width="28.7" height="34.7" rx="1.6" fill="#ebebf8" stroke="#615da8" stroke-width="1.3"/><path d="M14.1 4.5 L20.4 7.9 L20.4 14.9 L14.1 18.3 L7.8 14.9 L7.8 7.9Z" fill="#3f3a96"/><path d="M8.4 8.1 L14.1 11.3 L19.8 8.1 M14.1 11.3 V18.0" stroke="#c9c8ee" stroke-width="1" fill="none"/><rect x="2.6" y="21.3" width="24" height="10.7" rx="2" fill="#3f3a96"/><text x="14.6" y="30.0" font-family="Liberation Sans" font-size="9.3" font-weight="bold" fill="#f4f4ff" text-anchor="middle" textLength="10" lengthAdjust="spacingAndGlyphs">3D</text></svg>
<div class="a T" style="left:55px;top:282.9px">高清<span class="L">720P</span></div>
<div class="a T" style="left:55px;top:302.9px">编码器<span class="c">:</span><span class="L">H.264</span></div>
<div class="a T" style="left:213px;top:302.9px">分辨率<span class="c">:</span><span class="L">1280x720</span></div>
<div class="a T" style="left:417px;top:302.9px">质量<span class="c">:</span>标准</div>
<svg class="a" style="left:553px;top:299.7px" width="20" height="20" viewBox="-9 -9 20 20"><path d="M-0.54 -6.88 L0.54 -6.88 L1.64 -5.04 L2.41 -4.72 L4.48 -5.25 L5.25 -4.48 L4.72 -2.41 L5.04 -1.64 L6.88 -0.54 L6.88 0.54 L5.04 1.64 L4.72 2.41 L5.25 4.48 L4.48 5.25 L2.41 4.72 L1.64 5.04 L0.54 6.88 L-0.54 6.88 L-1.64 5.04 L-2.41 4.72 L-4.48 5.25 L-5.25 4.48 L-4.72 2.41 L-5.04 1.64 L-6.88 0.54 L-6.88 -0.54 L-5.04 -1.64 L-4.72 -2.41 L-5.25 -4.48 L-4.48 -5.25 L-2.41 -4.72 L-1.64 -5.04Z" fill="none" stroke="#7470d8" stroke-width="1.2" stroke-linejoin="round"/><circle cx="0" cy="0" r="2.3" fill="none" stroke="#7470d8" stroke-width="1.2"/><path d="M4.3 1.2 V7.6 M1.1 4.4 H7.5" stroke="#ffffff" stroke-width="3.2"/><path d="M4.3 1.4 V7.4 M1.3 4.4 H7.3" stroke="#4e4ac4" stroke-width="1.2"/></svg>
<svg class="a" style="left:13px;top:283.0px" width="30" height="36" viewBox="0 0 30 36"><rect x="0.65" y="0.65" width="28.7" height="34.7" rx="1.6" fill="#ebebf8" stroke="#615da8" stroke-width="1.3"/><rect x="9" y="6.5" width="11" height="11.6" fill="#3f3a96"/><rect x="9.9" y="7.4" width="1.3" height="2.5" fill="#e6e6f6"/><rect x="17.8" y="7.4" width="1.3" height="2.5" fill="#e6e6f6"/><rect x="9.9" y="11.0" width="1.3" height="2.5" fill="#e6e6f6"/><rect x="17.8" y="11.0" width="1.3" height="2.5" fill="#e6e6f6"/><rect x="9.9" y="14.6" width="1.3" height="2.5" fill="#e6e6f6"/><rect x="17.8" y="14.6" width="1.3" height="2.5" fill="#e6e6f6"/><rect x="12.1" y="7.5" width="4.8" height="4.3" fill="#d6d6f0"/><rect x="12.1" y="12.8" width="4.8" height="4.3" fill="#d6d6f0"/><rect x="2.6" y="21.3" width="24" height="10.7" rx="2" fill="#3f3a96"/><text x="14.6" y="30.0" font-family="Liberation Sans" font-size="9.3" font-weight="normal" fill="#f4f4ff" text-anchor="middle" textLength="17" lengthAdjust="spacingAndGlyphs">720P</text></svg>
<div class="a T" style="left:55px;top:329.3px">高清<span class="L">720P</span>自动修正分辨率</div>
<div class="a T" style="left:55px;top:349.3px">编码器<span class="c">:</span><span class="L">H.264</span></div>
<div class="a T" style="left:213px;top:349.3px">分辨率<span class="c">:</span><span class="L">1280x720</span></div>
<div class="a T" style="left:417px;top:349.3px">质量<span class="c">:</span>标准</div>
<svg class="a" style="left:553px;top:346.1px" width="20" height="20" viewBox="-9 -9 20 20"><path d="M-0.54 -6.88 L0.54 -6.88 L1.64 -5.04 L2.41 -4.72 L4.48 -5.25 L5.25 -4.48 L4.72 -2.41 L5.04 -1.64 L6.88 -0.54 L6.88 0.54 L5.04 1.64 L4.72 2.41 L5.25 4.48 L4.48 5.25 L2.41 4.72 L1.64 5.04 L0.54 6.88 L-0.54 6.88 L-1.64 5.04 L-2.41 4.72 L-4.48 5.25 L-5.25 4.48 L-4.72 2.41 L-5.04 1.64 L-6.88 0.54 L-6.88 -0.54 L-5.04 -1.64 L-4.72 -2.41 L-5.25 -4.48 L-4.48 -5.25 L-2.41 -4.72 L-1.64 -5.04Z" fill="none" stroke="#7470d8" stroke-width="1.2" stroke-linejoin="round"/><circle cx="0" cy="0" r="2.3" fill="none" stroke="#7470d8" stroke-width="1.2"/><path d="M4.3 1.2 V7.6 M1.1 4.4 H7.5" stroke="#ffffff" stroke-width="3.2"/><path d="M4.3 1.4 V7.4 M1.3 4.4 H7.3" stroke="#4e4ac4" stroke-width="1.2"/></svg>
<svg class="a" style="left:13px;top:329.4px" width="30" height="36" viewBox="0 0 30 36"><rect x="0.65" y="0.65" width="28.7" height="34.7" rx="1.6" fill="#ebebf8" stroke="#615da8" stroke-width="1.3"/><rect x="9" y="6.5" width="11" height="11.6" fill="#3f3a96"/><rect x="9.9" y="7.4" width="1.3" height="2.5" fill="#e6e6f6"/><rect x="17.8" y="7.4" width="1.3" height="2.5" fill="#e6e6f6"/><rect x="9.9" y="11.0" width="1.3" height="2.5" fill="#e6e6f6"/><rect x="17.8" y="11.0" width="1.3" height="2.5" fill="#e6e6f6"/><rect x="9.9" y="14.6" width="1.3" height="2.5" fill="#e6e6f6"/><rect x="17.8" y="14.6" width="1.3" height="2.5" fill="#e6e6f6"/><rect x="12.1" y="7.5" width="4.8" height="4.3" fill="#d6d6f0"/><rect x="12.1" y="12.8" width="4.8" height="4.3" fill="#d6d6f0"/><rect x="2.6" y="21.3" width="24" height="10.7" rx="2" fill="#3f3a96"/><text x="14.6" y="30.0" font-family="Liberation Sans" font-size="9.3" font-weight="normal" fill="#f4f4ff" text-anchor="middle" textLength="17" lengthAdjust="spacingAndGlyphs">720P</text></svg>
<div class="a T" style="left:55px;top:375.7px"><span class="L">640P</span></div>
<svg class="a" style="left:553px;top:392.5px" width="20" height="20" viewBox="-9 -9 20 20"><path d="M-0.54 -6.88 L0.54 -6.88 L1.64 -5.04 L2.41 -4.72 L4.48 -5.25 L5.25 -4.48 L4.72 -2.41 L5.04 -1.64 L6.88 -0.54 L6.88 0.54 L5.04 1.64 L4.72 2.41 L5.25 4.48 L4.48 5.25 L2.41 4.72 L1.64 5.04 L0.54 6.88 L-0.54 6.88 L-1.64 5.04 L-2.41 4.72 L-4.48 5.25 L-5.25 4.48 L-4.72 2.41 L-5.04 1.64 L-6.88 0.54 L-6.88 -0.54 L-5.04 -1.64 L-4.72 -2.41 L-5.25 -4.48 L-4.48 -5.25 L-2.41 -4.72 L-1.64 -5.04Z" fill="none" stroke="#7470d8" stroke-width="1.2" stroke-linejoin="round"/><circle cx="0" cy="0" r="2.3" fill="none" stroke="#7470d8" stroke-width="1.2"/><path d="M4.3 1.2 V7.6 M1.1 4.4 H7.5" stroke="#ffffff" stroke-width="3.2"/><path d="M4.3 1.4 V7.4 M1.3 4.4 H7.3" stroke="#4e4ac4" stroke-width="1.2"/></svg>
<svg class="a" style="left:13px;top:375.8px" width="30" height="36" viewBox="0 0 30 36"><rect x="0.65" y="0.65" width="28.7" height="34.7" rx="1.6" fill="#ebebf8" stroke="#615da8" stroke-width="1.3"/><rect x="9" y="6.5" width="11" height="11.6" fill="#3f3a96"/><rect x="9.9" y="7.4" width="1.3" height="2.5" fill="#e6e6f6"/><rect x="17.8" y="7.4" width="1.3" height="2.5" fill="#e6e6f6"/><rect x="9.9" y="11.0" width="1.3" height="2.5" fill="#e6e6f6"/><rect x="17.8" y="11.0" width="1.3" height="2.5" fill="#e6e6f6"/><rect x="9.9" y="14.6" width="1.3" height="2.5" fill="#e6e6f6"/><rect x="17.8" y="14.6" width="1.3" height="2.5" fill="#e6e6f6"/><rect x="12.1" y="7.5" width="4.8" height="4.3" fill="#d6d6f0"/><rect x="12.1" y="12.8" width="4.8" height="4.3" fill="#d6d6f0"/><rect x="2.6" y="21.3" width="24" height="10.7" rx="2" fill="#3f3a96"/><text x="14.6" y="30.0" font-family="Liberation Sans" font-size="9.3" font-weight="normal" fill="#f4f4ff" text-anchor="middle" textLength="17" lengthAdjust="spacingAndGlyphs">640P</text></svg>
</div>
</div>
</body></html>
